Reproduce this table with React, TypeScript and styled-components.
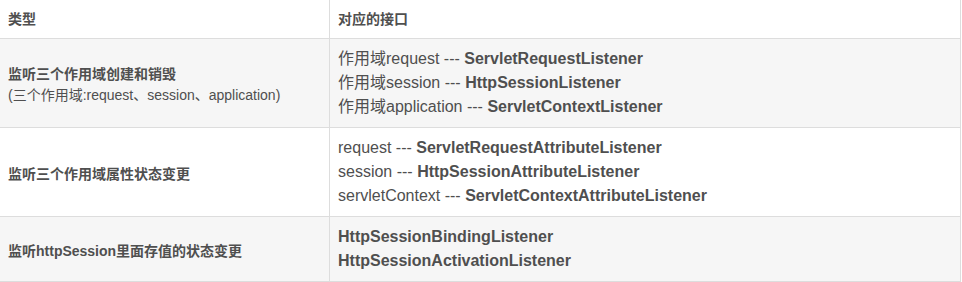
import React from 'react';
import styled, { createGlobalStyle } from 'styled-components';

const GlobalStyle = createGlobalStyle`
  html, body {
    margin: 0;
    padding: 0;
    background: #fff;
  }
  body {
    font-family: "Liberation Sans", "Noto Sans CJK SC", Arial, sans-serif;
    color: #4f4f4f;
  }
`;

const Table = styled.table`
  border-collapse: collapse;
  width: 962px;
  margin: -1px 0 0 -1px;
  table-layout: fixed;
  border: 1px solid #dddddd;
`;

const HeadCell = styled.th<{ $width?: number }>`
  ${(p) => (p.$width ? `width: ${p.$width}px;` : '')}
  height: 22px;
  padding: 8px;
  border: 1px solid #dddddd;
  text-align: left;
  font-size: 14px;
  font-weight: bold;
  line-height: 22px;
  vertical-align: middle;
`;

const Row = styled.tr<{ $shaded?: boolean }>`
  background: ${(p) => (p.$shaded ? '#f6f6f6' : '#ffffff')};
`;

const TypeCell = styled.td`
  padding: 10px 8px 6px;
  border: 1px solid #dddddd;
  font-size: 14px;
  line-height: 21px;
  vertical-align: middle;
`;

const ListenerCell = styled.td`
  padding: 8px;
  border: 1px solid #dddddd;
  font-size: 16px;
  line-height: 24px;
  vertical-align: middle;
`;

const Title = styled.div`
  font-weight: bold;
`;

const Note = styled.div`
  font-weight: normal;
`;

const Line = styled.div`
  white-space: nowrap;
`;

const Name = styled.strong`
  font-weight: bold;
`;

const rows = [
  {
    title: '监听三个作用域创建和销毁',
    note: '(三个作用域:request、session、application)',
    lines: [
      ['作用域request --- ', 'ServletRequestListener'],
      ['作用域session --- ', 'HttpSessionListener'],
      ['作用域application --- ', 'ServletContextListener'],
    ],
  },
  {
    title: '监听三个作用域属性状态变更',
    lines: [
      ['request --- ', 'ServletRequestAttributeListener'],
      ['session --- ', 'HttpSessionAttributeListener'],
      ['servletContext --- ', 'ServletContextAttributeListener'],
    ],
  },
  {
    title: '监听httpSession里面存值的状态变更',
    lines: [
      ['', 'HttpSessionBindingListener'],
      ['', 'HttpSessionActivationListener'],
    ],
  },
];

const App: React.FC = () => {
  return (
    <>
      <GlobalStyle />
      <Table>
        <thead>
          <tr>
            <HeadCell $width={313}>类型</HeadCell>
            <HeadCell>对应的接口</HeadCell>
          </tr>
        </thead>
        <tbody>
          {rows.map((row, i) => (
            <Row key={row.title} $shaded={i % 2 === 0}>
              <TypeCell>
                <Title>{row.title}</Title>
                {row.note && <Note>{row.note}</Note>}
              </TypeCell>
              <ListenerCell>
                {row.lines.map(([prefix, name]) => (
                  <Line key={name}>
                    {prefix}
                    <Name>{name}</Name>
                  </Line>
                ))}
              </ListenerCell>
            </Row>
          ))}
        </tbody>
      </Table>
    </>
  );
};

export default App;
